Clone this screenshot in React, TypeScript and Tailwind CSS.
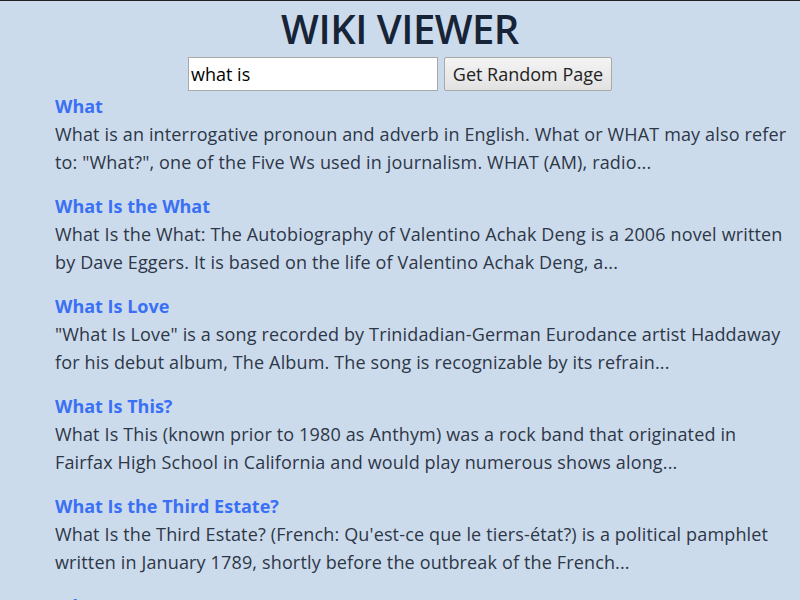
import React from "react";

const results = [
  {
    title: "What",
    text: 'What is an interrogative pronoun and adverb in English. What or WHAT may also refer to: "What?", one of the Five Ws used in journalism. WHAT (AM), radio...',
  },
  {
    title: "What Is the What",
    text: "What Is the What: The Autobiography of Valentino Achak Deng is a 2006 novel written by Dave Eggers. It is based on the life of Valentino Achak Deng, a...",
  },
  {
    title: "What Is Love",
    text: '"What Is Love" is a song recorded by Trinidadian-German Eurodance artist Haddaway for his debut album, The Album. The song is recognizable by its refrain...',
  },
  {
    title: "What Is This?",
    text: "What Is This (known prior to 1980 as Anthym) was a rock band that originated in Fairfax High School in California and would play numerous shows along...",
  },
  {
    title: "What Is the Third Estate?",
    text: "What Is the Third Estate? (French: Qu'est-ce que le tiers-état?) is a political pamphlet written in January 1789, shortly before the outbreak of the French...",
  },
  {
    title: "What Is It?",
    text: "What Is It? is a 2005 surrealist film written, edited, co-produced and directed by Crispin Glover...",
  },
];

export default function App() {
  return (
    <div className="h-[600px] overflow-hidden border-t border-[#222] bg-[#ccdbeb] font-['Open_Sans',sans-serif] text-[#2d3748]">
      <h1 className="pt-[2px] text-center text-[40px] leading-[52px] font-semibold tracking-[-0.5px] text-[#172437]">
        WIKI VIEWER
      </h1>
      <div className="mt-[2px] flex justify-center gap-[6px]">
        <input
          defaultValue="what is"
          className="h-[34px] w-[250px] border border-[#a9a9a9] bg-white px-[2px] text-[18px] text-black outline-none"
        />
        <button className="h-[34px] w-[168px] rounded-[2px] border border-[#a9a9a9] bg-gradient-to-b from-[#f4f4f4] to-[#e2e2e2] text-[18px] text-[#222]">
          Get Random Page
        </button>
      </div>
      <div className="ml-[55px] mt-[1px] flex w-[735px] flex-col gap-[16px]">
        {results.map((r) => (
          <div key={r.title}>
            <a className="block text-[18px] leading-[28px] font-bold text-[#3a70f5]">
              {r.title}
            </a>
            <p className="text-[18px] leading-[28px] tracking-[0.15px]">{r.text}</p>
          </div>
        ))}
      </div>
    </div>
  );
}
